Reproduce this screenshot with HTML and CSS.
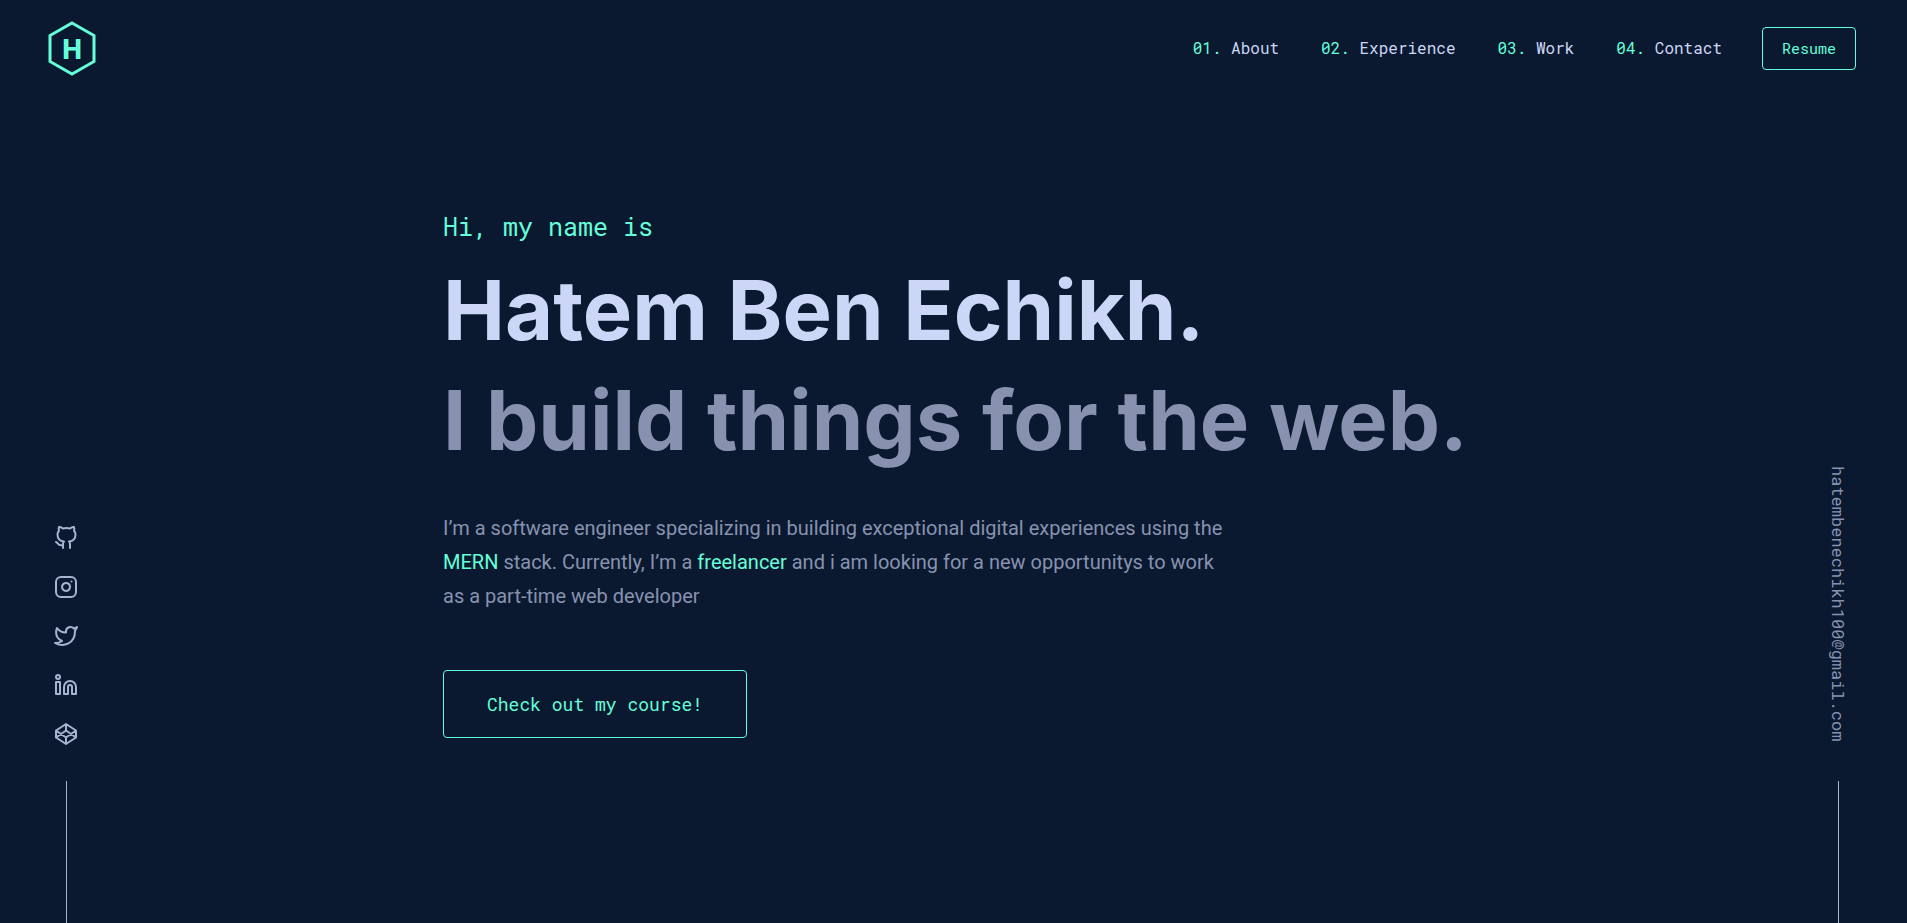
FILE: index.html
```html
<!DOCTYPE html>
<html lang="en">
<head>
<meta charset="utf-8">
<meta name="viewport" content="width=device-width, initial-scale=1">
<title>Hatem Ben Echikh</title>
<link rel="stylesheet" href="styles.css">
</head>
<body class="page">
<header class="header">
  <a class="logo" href="#home" aria-label="Home">
    <svg class="logo-mark" viewBox="0 0 48 56" aria-hidden="true">
      <path d="M24 3 46 15.500v26L24 54 2 41.500v-26Z" fill="none" stroke="currentColor" stroke-width="3"/>
      <text class="logo-letter" x="24" y="39" text-anchor="middle">H</text>
    </svg>
  </a>
  <nav class="nav" aria-label="Main">
    <ol class="nav-list">
      <li><a class="nav-link" href="#about"><span class="nav-number">01.</span> About</a></li>
      <li><a class="nav-link" href="#experience"><span class="nav-number">02.</span> Experience</a></li>
      <li><a class="nav-link" href="#work"><span class="nav-number">03.</span> Work</a></li>
      <li><a class="nav-link" href="#contact"><span class="nav-number">04.</span> Contact</a></li>
    </ol>
    <a class="button button-small" href="#resume">Resume</a>
  </nav>
</header>
<div class="body">
  <aside class="rail rail-left" aria-label="Social links">
    <a class="social" href="#github" aria-label="GitHub"><svg class="icon" viewBox="0 0 24 24"><path d="M9 19c-5 1.500-5-2.500-7-3m14 6v-3.870a3.370 3.370 0 0 0-.940-2.610c3.140-.350 6.440-1.540 6.440-7A5.440 5.440 0 0 0 20 4.770 5.070 5.070 0 0 0 19.910 1S18.730.650 16 2.480a13.380 13.380 0 0 0-7 0C6.270.650 5.090 1 5.090 1A5.070 5.070 0 0 0 5 4.770a5.440 5.440 0 0 0-1.500 3.780c0 5.420 3.300 6.610 6.440 7A3.370 3.370 0 0 0 9 18.130V22"/></svg></a>
    <a class="social" href="#instagram" aria-label="Instagram"><svg class="icon" viewBox="0 0 24 24"><rect x="2" y="2" width="20" height="20" rx="5" ry="5"/><path d="M16 11.370A4 4 0 1 1 12.630 8 4 4 0 0 1 16 11.370z"/><path d="M17.500 6.500h.01"/></svg></a>
    <a class="social" href="#twitter" aria-label="Twitter"><svg class="icon" viewBox="0 0 24 24"><path d="M23 3a10.900 10.900 0 0 1-3.140 1.530 4.480 4.480 0 0 0-7.860 3v1A10.660 10.660 0 0 1 3 4s-4 9 5 13a11.640 11.640 0 0 1-7 2c9 5 20 0 20-11.500a4.500 4.500 0 0 0-.080-.830A7.720 7.720 0 0 0 23 3z"/></svg></a>
    <a class="social" href="#linkedin" aria-label="LinkedIn"><svg class="icon" viewBox="0 0 24 24"><path d="M16 8a6 6 0 0 1 6 6v7h-4v-7a2 2 0 0 0-2-2 2 2 0 0 0-2 2v7h-4v-7a6 6 0 0 1 6-6z"/><rect x="2" y="9" width="4" height="12"/><circle cx="4" cy="4" r="2"/></svg></a>
    <a class="social" href="#codepen" aria-label="CodePen"><svg class="icon" viewBox="0 0 24 24"><path d="M12 2 22 8.500v7L12 22 2 15.500v-7L12 2zM12 22v-6.500M22 8.500l-10 7-10-7M2 15.500l10-7 10 7M12 2v6.500"/></svg></a>
  </aside>
  <main class="hero">
    <p class="greeting">Hi, my name is</p>
    <h1 class="title">Hatem Ben Echikh.</h1>
    <h2 class="title subtitle">I build things for the web.</h2>
    <p class="intro">I’m a software engineer specializing in building exceptional digital experiences using the <a class="accent" href="#mern">MERN</a> stack. Currently, I’m a <a class="accent" href="#freelancer">freelancer</a> and i am looking for a new opportunitys to work as a part-time web developer</p>
    <a class="button button-large" href="#course">Check out my course!</a>
  </main>
  <aside class="rail rail-right" aria-label="Email">
    <a class="email" href="mailto:hatembenechikh100@gmail.com">hatembenechikh100@gmail.com</a>
  </aside>
</div>
</body>
</html>
```
FILE: styles.css
```css
:root {
  --navy: #0a192f;
  --green: #64ffda;
  --light: #ccd6f6;
  --slate: #8892b0;
  --light-slate: #a8b2d1;
  --sans: Inter, "Liberation Sans", sans-serif;
  --text: Roboto, "Liberation Sans", sans-serif;
  --mono: "Roboto Mono", "DejaVu Sans Mono", monospace;
}

* { box-sizing: border-box; }

.page {
  margin: 0;
  min-height: 100vh;
  display: flex;
  flex-direction: column;
  background: var(--navy);
  color: var(--slate);
  font-family: var(--text);
}

a { color: inherit; text-decoration: none; }

.header {
  display: flex;
  align-items: center;
  justify-content: space-between;
  padding: 20px 51px 20px 48px;
}

.logo { display: block; color: var(--green); }
.logo-mark { display: block; width: 48px; height: 56px; }
.logo-letter { font: 800 28px var(--text); fill: currentColor; }

.nav { display: flex; align-items: center; gap: 40px; }
.nav-list {
  display: flex;
  gap: 42px;
  margin: 0;
  padding: 0;
  list-style: none;
}
.nav-link { font: 16px/24px var(--mono); color: var(--light); }
.nav-number { color: var(--green); }

.button {
  display: inline-block;
  border: 1px solid var(--green);
  border-radius: 4px;
  color: var(--green);
  font-family: var(--mono);
}
.button-small { padding: 10px 19px; font-size: 15px; line-height: 21px; }
.button-large { padding: 20px 43px; font-size: 18px; line-height: 26px; }

.body {
  flex: 1;
  display: grid;
  grid-template-columns: 138px minmax(0, 1fr) 138px;
}

.rail {
  display: flex;
  flex-direction: column;
  align-items: center;
  justify-content: flex-end;
}
.rail-left { padding-right: 6px; }
.rail::after {
  content: "";
  width: 1px;
  height: 142px;
  background: var(--light-slate);
}
.social { padding-bottom: 25px; color: var(--light-slate); }
.social:last-of-type { padding-bottom: 35px; }
.icon {
  display: block;
  width: 24px;
  height: 24px;
  fill: none;
  stroke: currentColor;
  stroke-width: 2;
  stroke-linecap: round;
  stroke-linejoin: round;
}
.email {
  margin-bottom: 40px;
  writing-mode: vertical-rl;
  font: 17px/20px var(--mono);
}

.hero {
  width: 100%;
  max-width: 1021px;
  margin: 0 auto;
  padding-top: 113px;
}
.greeting { margin: 0 0 10px; color: var(--green); font: 25px/36px var(--mono); }
.title { margin: 0; color: var(--light); font: 700 83px/110px var(--sans); }
.subtitle { color: var(--slate); }
.intro { max-width: 794px; margin: 36px 0 57px; font-size: 20px; line-height: 34px; }
.accent { color: var(--green); }

@media (min-width: 1320px) {
  .title { white-space: nowrap; }
}
```
